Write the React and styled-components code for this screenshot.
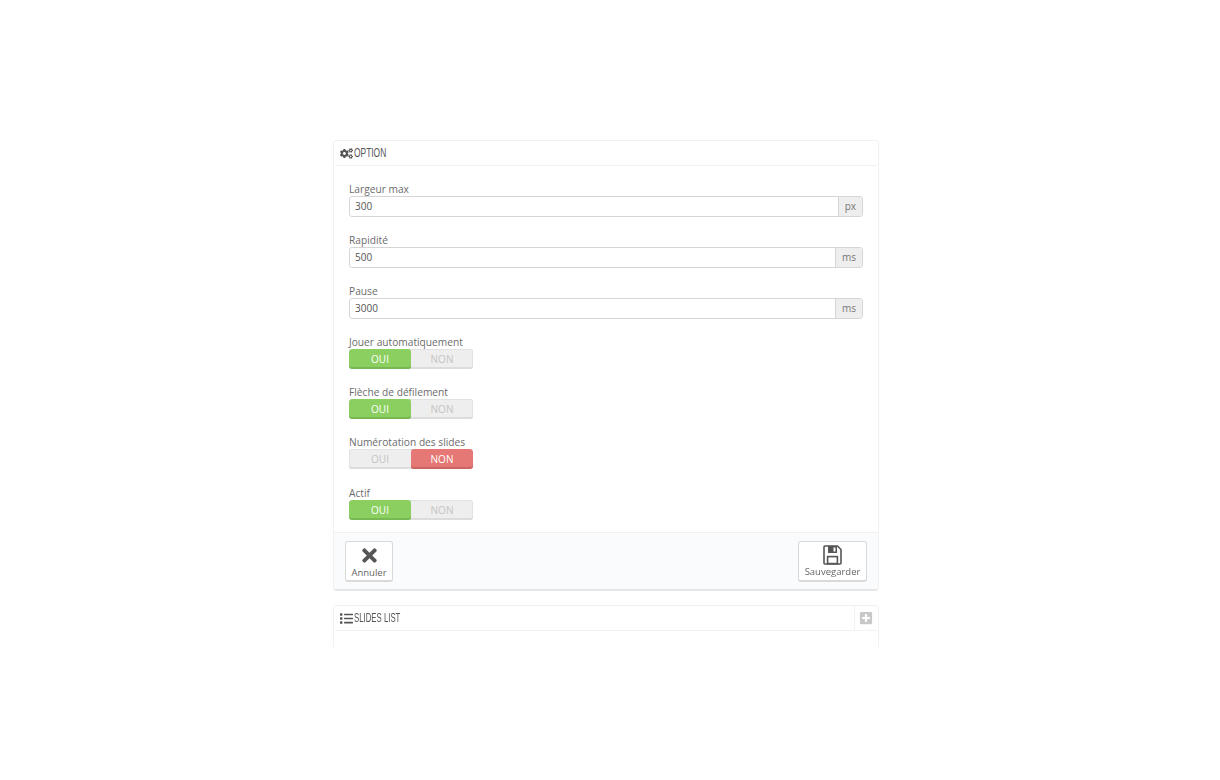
import React from 'react';
import styled, { createGlobalStyle } from 'styled-components';
import { FaCogs, FaList, FaPlusSquare, FaTimes } from 'react-icons/fa';

const GlobalStyle = createGlobalStyle`
  html, body {
    margin: 0;
    padding: 0;
    background: #fff;
  }
  body {
    font-family: 'Open Sans', sans-serif;
    font-size: 10px;
    color: #666;
  }
`;

const Page = styled.div`
  width: 546px;
  padding: 140px 0 0 333px;
  display: flex;
  flex-direction: column;
  gap: 14px;
  filter: blur(0.3px);
`;

const Panel = styled.section`
  border: 1px solid #f1f1f1;
  border-bottom: ${(p) => (p.$open ? 'none' : '2px solid #e6e6e6')};
  border-radius: 4px 4px ${(p) => (p.$open ? '0 0' : '4px 4px')};
  height: ${(p) => (p.$open ? '42px' : 'auto')};
  box-sizing: border-box;
  background: #fff;
`;

const PanelHeader = styled.header`
  height: 24px;
  margin: 0 1px;
  border-bottom: 1px solid #f2f2f2;
  display: flex;
  align-items: center;
  gap: 1px;
  padding-left: 5px;
  color: #555;
  svg { font-size: 13px; color: #555; }
`;

const PanelTitle = styled.span`
  font-family: 'Liberation Sans', sans-serif;
  font-size: 12px;
  color: #555;
  text-transform: uppercase;
  transform: scaleX(${(p) => p.$squeeze});
  transform-origin: left center;
`;

const HeaderAction = styled.span`
  margin-left: auto;
  align-self: stretch;
  width: 22px;
  border-left: 1px solid #f2f2f2;
  display: flex;
  align-items: center;
  justify-content: center;
  svg { font-size: 14px; color: #c8c8c8; }
`;

const Form = styled.div`
  padding: 15px 15px 12px;
  display: flex;
  flex-direction: column;
`;

const Field = styled.div`
  margin-bottom: ${(p) => p.$gap}px;
`;

const Label = styled.label`
  display: block;
  height: 15px;
  line-height: 16px;
  font-size: 10.2px;
  color: #6c6c6c;
`;

const InputGroup = styled.div`
  display: flex;
  height: 21px;
  box-sizing: border-box;
  border: 1px solid #d6d6d6;
  border-radius: 3px;
  overflow: hidden;
`;

const Input = styled.div`
  flex: 1;
  padding-left: 5px;
  line-height: 19px;
  font-size: 10px;
  color: #555;
`;

const Addon = styled.span`
  padding: 0 6px;
  border-left: 1px solid #d6d6d6;
  background: #eeeeee;
  line-height: 19px;
  font-size: 10px;
  color: #777;
`;

const Switch = styled.div`
  display: flex;
  width: 124px;
  height: 20px;
  border-radius: 3px;
  overflow: hidden;
  background: #eeeeee;
  box-shadow: inset 0 -2px 0 #dcdcdc, inset 0 0 0 1px #e2e2e2;
`;

const SwitchOption = styled.span`
  flex: 1;
  display: flex;
  align-items: center;
  justify-content: center;
  font-size: 10px;
  border-radius: 3px;
  color: ${(p) => (p.$active ? '#fff' : '#c4c4c4')};
  background: ${(p) => (p.$active === 'yes' ? '#8bcf60' : p.$active === 'no' ? '#e57774' : 'transparent')};
  box-shadow: ${(p) => (p.$active === 'yes' ? 'inset 0 -2px 0 #78b852' : p.$active === 'no' ? 'inset 0 -2px 0 #cc6461' : 'none')};
`;

const Footer = styled.footer`
  height: 57px;
  box-sizing: border-box;
  border-top: 1px solid #f0f0f0;
  background: #fafbfc;
  padding: 8px 11px 0;
  display: flex;
  justify-content: space-between;
  align-items: flex-start;
`;

const ActionButton = styled.button`
  width: ${(p) => p.$width}px;
  height: 41px;
  margin: 0;
  padding: 3px 0 0;
  box-sizing: border-box;
  border: 1px solid #d9d9d9;
  border-bottom-width: 2px;
  border-radius: 3px;
  background: #fff;
  font-family: 'Open Sans', sans-serif;
  font-size: 9.5px;
  color: #666;
  display: flex;
  flex-direction: column;
  align-items: center;
  gap: 0;
  svg { font-size: 21px; color: #555; }
`;

// floppy outline from the older icon set, none of the packages has this one
const FloppyIcon = () => (
  <svg width="19" height="20" viewBox="0 0 19 20" fill="none">
    <path d="M2 1h12.5L18 4.5V18a1 1 0 0 1-1 1H2a1 1 0 0 1-1-1V2a1 1 0 0 1 1-1z" stroke="#555" strokeWidth="1.6" />
    <path d="M5 1h9v6.5a.5.5 0 0 1-.5.5h-8a.5.5 0 0 1-.5-.5z" fill="#555" />
    <rect x="10.5" y="2.5" width="2" height="4" fill="#fff" />
    <rect x="4.6" y="11.6" width="9.8" height="7" stroke="#555" strokeWidth="1.6" />
  </svg>
);

const fields = [
  { label: 'Largeur max', value: '300', unit: 'px' },
  { label: 'Rapidité', value: '500', unit: 'ms' },
  { label: 'Pause', value: '3000', unit: 'ms' },
];

const switches = [
  { label: 'Jouer automatiquement', on: true, gap: 15 },
  { label: 'Flèche de défilement', on: true, gap: 15 },
  { label: 'Numérotation des slides', on: false, gap: 16 },
  { label: 'Actif', on: true, gap: 0 },
];

export default function App() {
  return (
    <>
      <GlobalStyle />
      <Page>
        <Panel>
          <PanelHeader><FaCogs /><PanelTitle $squeeze={0.7}>Option</PanelTitle></PanelHeader>
          <Form>
            {fields.map((f) => (
              <Field key={f.label} $gap={15}>
                <Label>{f.label}</Label>
                <InputGroup>
                  <Input>{f.value}</Input>
                  <Addon>{f.unit}</Addon>
                </InputGroup>
              </Field>
            ))}
            {switches.map((s) => (
              <Field key={s.label} $gap={s.gap}>
                <Label>{s.label}</Label>
                <Switch>
                  <SwitchOption $active={s.on ? 'yes' : undefined}>OUI</SwitchOption>
                  <SwitchOption $active={s.on ? undefined : 'no'}>NON</SwitchOption>
                </Switch>
              </Field>
            ))}
          </Form>
          <Footer>
            <ActionButton $width={48}><FaTimes />Annuler</ActionButton>
            <ActionButton $width={69}><FloppyIcon />Sauvegarder</ActionButton>
          </Footer>
        </Panel>
        <Panel $open>
          <PanelHeader>
            <FaList /><PanelTitle $squeeze={0.65}>Slides list</PanelTitle>
            <HeaderAction><FaPlusSquare /></HeaderAction>
          </PanelHeader>
        </Panel>
      </Page>
    </>
  );
}
